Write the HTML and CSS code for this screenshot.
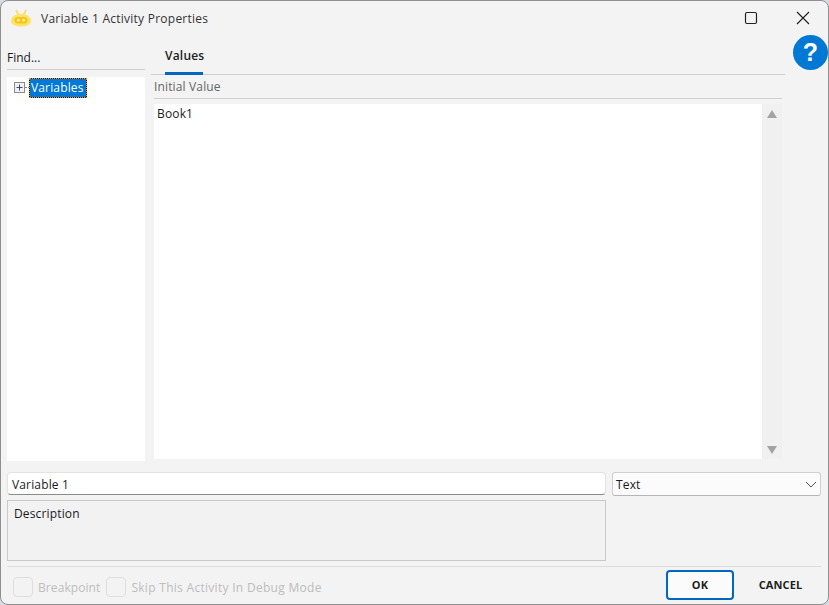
FILE: index.html
```html
<!DOCTYPE html>
<html lang="en">
<head>
<meta charset="utf-8">
<title>Variable 1 Activity Properties</title>
<link rel="stylesheet" href="styles.css">
</head>
<body>
<div class="window">
  <header class="titlebar">
    <svg class="app-icon" width="22" height="20" viewBox="0 0 22 20">
      <path d="M6 2 8.500 7M16 2 13.500 7" stroke="#fbdc6a" stroke-width="1.800" fill="none"/>
      <path d="M1 13C1 8.500 5.500 6 11 6s10 2.500 10 7c0 3.500-4 5.500-10 5.500S1 16.500 1 13z" fill="#fee26b"/>
      <rect x="4.500" y="9" width="13" height="6.500" rx="3.250" fill="#f8c514"/>
      <circle cx="8.300" cy="12.200" r="1.400" fill="#fff3b5"/>
      <circle cx="13.700" cy="12.200" r="1.400" fill="#fff3b5"/>
    </svg>
    <span class="title">Variable 1 Activity Properties</span>
    <svg class="win-btn maximize" width="14" height="14" viewBox="0 0 14 14"><rect x="1.500" y="1.500" width="11" height="11" rx="1.500" fill="none" stroke="#222" stroke-width="1.200"/></svg>
    <svg class="win-btn close" width="14" height="14" viewBox="0 0 14 14"><path d="M1 1 13 13M13 1 1 13" stroke="#222" stroke-width="1.200" fill="none"/></svg>
  </header>
  <main class="content">
    <aside class="sidebar">
      <div class="find">Find...</div>
      <div class="tree">
        <div class="tree-row">
          <svg class="expander" width="11" height="11" viewBox="0 0 11 11">
            <rect x="0.500" y="0.500" width="10" height="10" fill="#f0f0f0" stroke="#8b8b8b"/>
            <path d="M2.500 5.500h6M5.500 2.500v6" stroke="#3b4a78" fill="none"/>
          </svg>
          <span class="dots"></span>
          <span class="tree-label">Variables</span>
        </div>
      </div>
    </aside>
    <section class="pane">
      <nav class="tabs"><span class="tab">Values</span></nav>
      <div class="field-label">Initial Value</div>
      <div class="editor">
        <div class="editor-text">Book1</div>
        <div class="scrollbar">
          <span class="arrow up"></span>
          <span class="arrow down"></span>
        </div>
      </div>
    </section>
    <div class="help-col"><span class="help">?</span></div>
  </main>
  <section class="details">
    <div class="details-left">
      <div class="name-input">Variable 1</div>
      <div class="description">Description</div>
    </div>
    <div class="type-select">
      <span>Text</span>
      <svg width="12" height="7" viewBox="0 0 12 7"><path d="M1 1l5 5 5-5" fill="none" stroke="#555" stroke-width="1"/></svg>
    </div>
  </section>
  <footer class="footer">
    <label class="check"><span class="box"></span>Breakpoint</label>
    <label class="check check-wide"><span class="box"></span>Skip This Activity In Debug Mode</label>
    <button class="btn ok">OK</button>
    <button class="btn cancel">CANCEL</button>
  </footer>
</div>
</body>
</html>
```
FILE: styles.css
```css
* { box-sizing: border-box; }
html, body { margin: 0; height: 100%; background: #d9dbe2; overflow: hidden; }
body { font-family: "Open Sans", "Noto Sans", sans-serif; font-size: 12px; color: #1a1a1a; letter-spacing: .15px; }
.window {
  width: 829px; height: 605px;
  background: #f3f3f3;
  border: 1px solid #8f8f8f;
  border-radius: 8px;
  display: flex; flex-direction: column;
  overflow: hidden;
}
.titlebar { height: 36px; display: flex; align-items: center; padding: 0 18px 2px 9px; flex: none; }
.app-icon { margin-right: 9px; margin-top: -1px; }
.title { flex: 1; color: #333; letter-spacing: .25px; }
.win-btn { flex: none; }
.maximize { margin-right: 38px; }
.close { margin-right: 0; }
.content { flex: none; height: 425px; display: flex; padding-left: 6px; }
.sidebar { width: 138px; display: flex; flex-direction: column; }
.find { height: 33px; line-height: 42px; border-bottom: 1px solid #d0d0d0; color: #1a1a1a; letter-spacing: 0; }
.tree { margin-top: 7px; height: 384px; background: #fff; }
.tree-row { display: flex; align-items: center; padding-left: 7px; height: 21px; }
.dots { width: 4px; border-top: 1px dotted #888; }
.tree-label {
  background: linear-gradient(#0078d7, #0078d7) padding-box, #141414 border-box;
  color: #fff;
  border: 1px dotted #f39a1c;
  height: 20px; line-height: 17px; padding: 0 0 0 1px; width: 58px;
  white-space: nowrap;
}
.pane { margin-left: 6px; width: 634px; display: flex; flex-direction: column; }
.tabs { height: 38px; border-bottom: 1px solid #cfcfcf; flex: none; padding-left: 14px; }
.tab {
  display: inline-block; height: 38px; width: 38px; margin-top: 0;
  line-height: 37px; font-weight: 600; color: #222; white-space: nowrap;
  box-shadow: inset 0 -3px 0 #0067c0; letter-spacing: .2px;
}
.field-label {
  margin-left: 3px; width: 628px; height: 24px; line-height: 23px;
  color: #666; border-bottom: 1px solid #cfcfcf; flex: none;
}
.editor { margin: 5px 0 0 3px; width: 628px; height: 355px; display: flex; background: #fff; }
.editor-text { flex: 1; padding: 1px 3px; color: #1a1a1a; }
.scrollbar {
  width: 20px; background: #f0f0f0;
  display: flex; flex-direction: column; justify-content: space-between; align-items: center;
  padding: 6px 0 5px;
}
.arrow { width: 0; height: 0; border-left: 5px solid transparent; border-right: 5px solid transparent; }
.up { border-bottom: 8px solid #a3a3a3; }
.down { border-top: 8px solid #a3a3a3; }
.help-col { margin-left: 8px; margin-top: -2px; }
.help {
  display: block; width: 35px; height: 35px; border-radius: 50%;
  background: #0078d4; color: #fff; text-align: center;
  font: bold 25px/34px "Liberation Sans", sans-serif;
}
.details { flex: none; display: flex; padding: 10px 7px 0 6px; gap: 6px; height: 104px; }
.details-left { width: 599px; display: flex; flex-direction: column; gap: 5px; }
.name-input {
  height: 23px; background: #fff; border: 1px solid #e3e3e3; border-bottom: 1px solid #8a8a8a;
  border-radius: 4px; padding: 0 4px; line-height: 23px;
}
.description {
  height: 61px; border: 1px solid #c9c9c9; padding: 5px 6px; line-height: 16px;
  background: #f2f2f2;
}
.type-select {
  width: 209px; height: 24px; background: #fbfbfb; border: 1px solid #d0d0d0; border-bottom-color: #b5b5b5;
  border-radius: 3px; display: flex; justify-content: space-between; align-items: center; padding: 0 3px 0 3px;
}
.footer {
  flex: none; margin: 0 7px 0 6px; border-top: 1px solid #dcdcdc;
  display: flex; align-items: center; padding: 0 0 0 6px; height: 37px; color: #bdbdbd;
}
.check { display: flex; align-items: center; gap: 5px; margin: 4px 6px 0 0; letter-spacing: .08px; }
.check-wide { letter-spacing: .29px; }
.box { width: 20px; height: 20px; border: 1px solid #dedede; border-radius: 4px; }
.btn {
  font-family: "Open Sans", "Noto Sans", sans-serif; font-size: 11px; font-weight: 700;
  background: transparent; color: #1f1f1f; cursor: pointer; letter-spacing: .1px; padding-bottom: 2px;
}
.ok {
  margin-left: auto; width: 68px; height: 30px; border: 2px solid #0067c0; border-radius: 4px; background: #fbfbfb;
}
.cancel { width: 87px; height: 30px; border: 0; padding-left: 6px; padding-right: 0; }
```
